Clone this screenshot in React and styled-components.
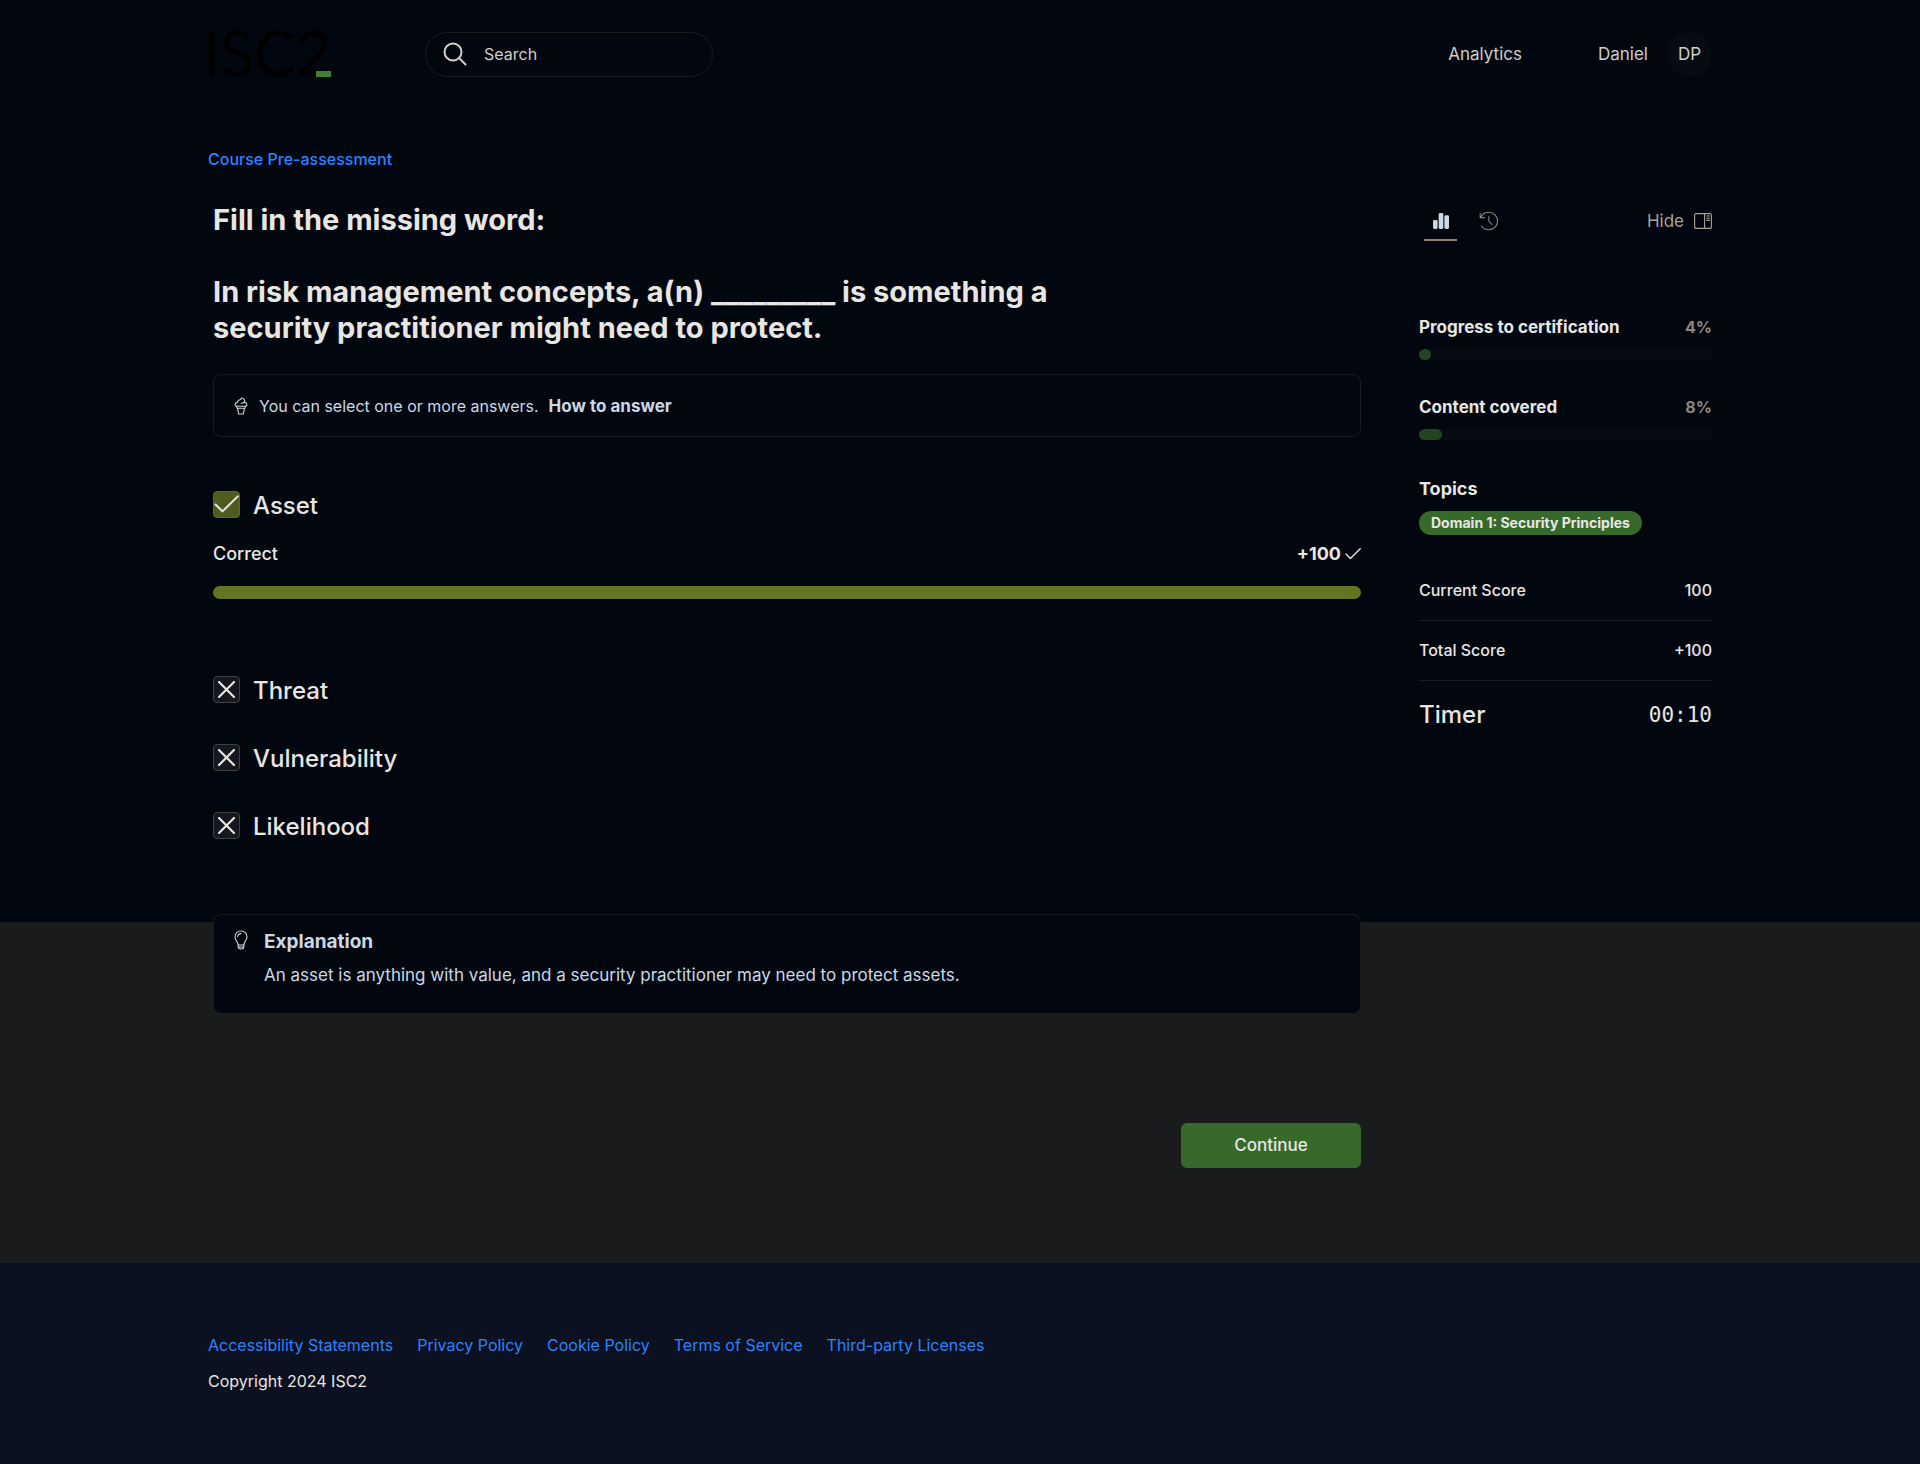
import { useState } from "react";
import styled, { createGlobalStyle, ThemeProvider } from "styled-components";

const theme = {
  colors: {
    page: "#02060e",
    shade: "#1a1b1c",
    footer: "#0b1120",
    line: "#191b1f",
    track: "#070b12",
    text: "#e8e6e3",
    nav: "#d1cdc7",
    cool: "#cbd8e6",
    muted: "#8a8681",
    link: "#2b83ff",
    green: "#376a2a",
    darkGreen: "#234420",
    olive: "#657422",
    oliveBox: "#505c1e",
  },
};

const GlobalStyle = createGlobalStyle`
  * {
    box-sizing: border-box;
  }
  body {
    margin: 0;
    background-color: #1a1b1c;
    color: #e8e6e3;
    font-family: Inter, "Open Sans", sans-serif;
    font-size: 16px;
    line-height: 24px;
  }
  button, input {
    font: inherit;
    color: inherit;
  }
  h1, h2, p, dl, dd, ul {
    margin: 0;
    padding: 0;
  }
`;

const answers = [
  { id: "asset", label: "Asset", correct: true, score: "+100" },
  { id: "threat", label: "Threat" },
  { id: "vulnerability", label: "Vulnerability" },
  { id: "likelihood", label: "Likelihood" },
];

const progress = [
  { label: "Progress to certification", value: 4 },
  { label: "Content covered", value: 8 },
];

const scores = [
  { label: "Current Score", value: "100" },
  { label: "Total Score", value: "+100" },
];

const footerLinks = [
  "Accessibility Statements",
  "Privacy Policy",
  "Cookie Policy",
  "Terms of Service",
  "Third-party Licenses",
];

export default function App() {
  return (
    <ThemeProvider theme={theme}>
      <GlobalStyle />
      <Page>
        <SiteHeader />
        <Container>
          <Breadcrumb>
            <Link href="#course">Course Pre-assessment</Link>
          </Breadcrumb>
          <Columns>
            <Question />
            <Sidebar />
          </Columns>
        </Container>
      </Page>
      <SiteFooter />
    </ThemeProvider>
  );
}

function SiteHeader() {
  return (
    <Header>
      <HeaderInner>
        <LogoLink href="#home" aria-label="ISC2 home">
          <Logo />
        </LogoLink>
        <SearchBox>
          <SearchIcon />
          <SearchInput type="search" placeholder="Search" aria-label="Search" />
        </SearchBox>
        <HeaderNav>
          <NavLink href="#analytics">Analytics</NavLink>
          <UserButton type="button">
            Daniel
            <Initials>DP</Initials>
          </UserButton>
        </HeaderNav>
      </HeaderInner>
    </Header>
  );
}

function Question() {
  return (
    <main>
      <Title>
        Fill in the missing word:
        <br />
        <br />
        In risk management concepts, a(n) _________ is something a security
        practitioner might need to protect.
      </Title>
      <Hint>
        <IceCreamIcon />
        <p>You can select one or more answers.</p>
        <HintButton type="button">How to answer</HintButton>
      </Hint>
      <Answers>
        {answers.map((answer) => (
          <Answer key={answer.id} {...answer} />
        ))}
      </Answers>
      <Explanation>
        <BulbIcon />
        <div>
          <ExplanationTitle>Explanation</ExplanationTitle>
          <ExplanationText>
            An asset is anything with value, and a security practitioner may
            need to protect assets.
          </ExplanationText>
        </div>
      </Explanation>
      <Actions>
        <ContinueButton type="button">Continue</ContinueButton>
      </Actions>
    </main>
  );
}

function Answer({ id, label, correct, score }) {
  return (
    <AnswerItem $correct={correct}>
      <AnswerLabel htmlFor={id}>
        <CheckWrapper>
          <Checkbox id={id} type="checkbox" $correct={correct} defaultChecked={correct} />
          {correct ? <CheckIcon size={25} width={1.3} /> : <CrossIcon />}
        </CheckWrapper>
        {label}
      </AnswerLabel>
      {correct && (
        <>
          <ResultRow>
            <span>Correct</span>
            <ResultScore>
              {score}
              <CheckIcon size={16} width={1.4} />
            </ResultScore>
          </ResultRow>
          <ResultBar />
        </>
      )}
    </AnswerItem>
  );
}

function Sidebar() {
  const [tab, setTab] = useState("stats");

  return (
    <Aside>
      <TabBar>
        <TabButton
          type="button"
          aria-label="Statistics"
          $active={tab === "stats"}
          onClick={() => setTab("stats")}
        >
          <BarsIcon />
        </TabButton>
        <TabButton
          type="button"
          aria-label="History"
          $active={tab === "history"}
          onClick={() => setTab("history")}
        >
          <HistoryIcon />
        </TabButton>
        <HideButton type="button">
          Hide
          <PanelIcon />
        </HideButton>
      </TabBar>
      <ProgressList>
        {progress.map(({ label, value }) => (
          <div key={label}>
            <ProgressHead>
              <ProgressLabel>{label}</ProgressLabel>
              <Percent>{value}%</Percent>
            </ProgressHead>
            <Track role="progressbar" aria-label={label} aria-valuenow={value}>
              <Fill style={{ width: `${value}%` }} />
            </Track>
          </div>
        ))}
      </ProgressList>
      <TopicsTitle>Topics</TopicsTitle>
      <Topic>Domain 1: Security Principles</Topic>
      <ScoreList>
        {scores.map(({ label, value }) => (
          <ScoreRow key={label}>
            <dt>{label}</dt>
            <dd>{value}</dd>
          </ScoreRow>
        ))}
        <TimerRow>
          <dt>Timer</dt>
          <TimerValue>00:10</TimerValue>
        </TimerRow>
      </ScoreList>
    </Aside>
  );
}

function SiteFooter() {
  return (
    <Footer>
      <Container>
        <FooterLinks>
          {footerLinks.map((label) => (
            <li key={label}>
              <Link href="#footer">{label}</Link>
            </li>
          ))}
        </FooterLinks>
        <p>Copyright 2024 ISC2</p>
      </Container>
    </Footer>
  );
}

/* Icons */

function Logo() {
  return (
    <svg width="136" height="84" viewBox="-6 -19 136 84" aria-hidden="true">
      <text x="-5" y="45" fontFamily="Lato" fontSize="62" fill="#000">
        ISC2
      </text>
      <rect x="108" y="40" width="15" height="6" fill="#417e31" />
    </svg>
  );
}

function SearchIcon() {
  return (
    <svg width="24" height="24" viewBox="0 0 24 24" fill="none" stroke="#d1cdc7" strokeWidth="2" strokeLinecap="round">
      <circle cx="10" cy="10" r="8.5" />
      <path d="M16 16l6.5 6.5" />
    </svg>
  );
}

function IceCreamIcon() {
  return (
    <svg width="16" height="18" viewBox="0 0 16 18" fill="none" stroke="#cbd8e6" strokeWidth="1.1" strokeLinejoin="round" strokeLinecap="round">
      <path d="M5.6 3.4C6.4 2.4 8.6 3 8.4 1C11.2 1.2 12.2 3.2 11.6 5.4C14.4 5.8 14.4 9.2 12.4 9.2H3.6C1.6 9.2 1.6 5.8 4.4 5.4C4.2 4.6 4.8 3.8 5.6 3.4" />
      <path d="M8.2 6.2C9.2 6.4 10.4 6 11 5" />
      <path d="M3.6 9.4L4 11.2H12L12.4 9.4M4.6 11.4L5.6 17H10.4L11.4 11.4" />
    </svg>
  );
}

function BulbIcon() {
  return (
    <svg width="16" height="20" viewBox="0 0 16 20" fill="none" stroke="#cbd8e6" strokeWidth="1.1" strokeLinejoin="round" strokeLinecap="round">
      <path d="M5.2 15C5.2 12 2 10.4 2 6.8C2 3.4 4.6 1 8 1S14 3.4 14 6.8C14 10.4 10.8 12 10.8 15Z" />
      <path d="M5.2 15V16.6C5.2 18 6.4 19 8 19S10.8 18 10.8 16.6V15M5.4 17H10.6" />
      <path d="M4.6 6.8C4.6 4.9 6 3.6 8 3.6" />
    </svg>
  );
}

function CheckIcon({ size, width }) {
  return (
    <svg width={size} height={size} viewBox="0 0 16 16" fill="none" stroke="#e8e6e3" strokeWidth={width} strokeLinecap="round" strokeLinejoin="round">
      <path d="M1 8L5.4 12.4L15.2 2.8" />
    </svg>
  );
}

function CrossIcon() {
  return (
    <svg width="17" height="17" viewBox="0 0 17 17" fill="none" stroke="#e8e6e3" strokeWidth="2.2" strokeLinecap="round">
      <path d="M1 1L16 16M16 1L1 16" />
    </svg>
  );
}

function BarsIcon() {
  return (
    <svg width="16" height="16" viewBox="0 0 16 16" fill="#cbd8e6">
      <rect x="0" y="7" width="4.6" height="9" rx="1.4" />
      <rect x="5.7" y="0" width="4.6" height="16" rx="1.4" />
      <rect x="11.4" y="2.2" width="4.6" height="13.8" rx="1.4" />
    </svg>
  );
}

function HistoryIcon() {
  return (
    <svg width="20" height="20" viewBox="0 0 20 20" fill="none" stroke="#8a8681" strokeWidth="1.1" strokeLinecap="round" strokeLinejoin="round">
      <path d="M1.2 2.6V6.6H5.4M1.8 6.2C3.2 3 6.2 1.2 9.8 1.2C14.8 1.2 18.6 5.2 18.6 10S14.8 18.8 9.8 18.8C6.6 18.8 4 17.4 2.4 15" />
      <path d="M9.8 5.6V10L12.8 13.4" />
    </svg>
  );
}

function PanelIcon() {
  return (
    <svg width="18" height="16" viewBox="0 0 18 16" fill="none" stroke="#a8a39c" strokeWidth="1.1" strokeLinecap="round">
      <rect x=".6" y=".6" width="16.8" height="14.8" rx="2" />
      <path d="M10.6 .6V15.4M12.8 3H15.4M12.8 5.2H15.4M12.8 7.4H15.4" />
    </svg>
  );
}

/* Layout */

// the dark backdrop covers only the first screen, the rest stays grey
const Page = styled.div`
  background: linear-gradient(
    ${({ theme }) => theme.colors.page} 922px,
    ${({ theme }) => theme.colors.shade} 922px
  );
`;

const Container = styled.div`
  width: 100%;
  max-width: 1552px;
  margin: 0 auto;
  padding: 0 24px;
`;

const Columns = styled.div`
  display: grid;
  grid-template-columns: minmax(0, 1fr) 293px;
  gap: 58px;
  padding-left: 5px;
`;

const Header = styled.header`
  border-bottom: 1px solid #04080f;
`;

const HeaderInner = styled(Container)`
  display: flex;
  align-items: center;
  height: 108px;
`;

const LogoLink = styled.a`
  display: flex;
  margin: 0 87px 0 -6px;
`;

const SearchBox = styled.label`
  display: flex;
  align-items: center;
  gap: 17px;
  width: 288px;
  height: 45px;
  padding: 0 17px;
  border: 1px solid ${({ theme }) => theme.colors.line};
  border-radius: 24px;
`;

const SearchInput = styled.input`
  flex: 1;
  min-width: 0;
  padding: 0;
  border: none;
  outline: none;
  background-color: transparent;
  color: ${({ theme }) => theme.colors.nav};
  appearance: none;

  &::placeholder {
    color: ${({ theme }) => theme.colors.nav};
    opacity: 1;
  }
`;

const HeaderNav = styled.nav`
  display: flex;
  align-items: center;
  gap: 76px;
  margin-left: auto;
  font-size: 17px;
`;

const NavLink = styled.a`
  color: ${({ theme }) => theme.colors.nav};
  text-decoration: none;
`;

const UserButton = styled.button`
  display: flex;
  align-items: center;
  gap: 19px;
  padding: 0;
  border: none;
  background-color: transparent;
  color: ${({ theme }) => theme.colors.nav};
  cursor: pointer;
`;

const Initials = styled.span`
  display: flex;
  align-items: center;
  justify-content: center;
  width: 45px;
  height: 45px;
  border-radius: 50%;
  background-color: ${({ theme }) => theme.colors.track};
`;

const Link = styled.a`
  color: ${({ theme }) => theme.colors.link};
  text-decoration: none;
`;

const Breadcrumb = styled.nav`
  padding: 38px 0 31px;
  font-weight: 500;
`;

/* Question */

const Title = styled.h1`
  max-width: 870px;
  font-size: 29px;
  line-height: 36px;
  font-weight: 700;
`;

const Hint = styled.div`
  display: flex;
  align-items: center;
  gap: 10px;
  height: 63px;
  margin-top: 28px;
  padding: 0 19px;
  border: 1px solid ${({ theme }) => theme.colors.line};
  border-radius: 8px;
  color: ${({ theme }) => theme.colors.cool};
`;

const HintButton = styled.button`
  padding: 0;
  border: none;
  background-color: transparent;
  font-size: 17px;
  font-weight: 700;
  cursor: pointer;
`;

const Answers = styled.ul`
  display: flex;
  flex-direction: column;
  gap: 40px;
  margin-top: 54px;
  list-style: none;
`;

const AnswerItem = styled.li`
  margin-bottom: ${({ $correct }) => ($correct ? "37px" : "0")};
`;

const AnswerLabel = styled.label`
  display: flex;
  align-items: flex-start;
  gap: 13px;
  height: 28px;
  font-size: 24px;
  line-height: 30px;
  font-weight: 500;
`;

const CheckWrapper = styled.span`
  display: grid;
  place-items: center;

  > * {
    grid-area: 1 / 1;
  }
  svg {
    pointer-events: none;
  }
`;

const Checkbox = styled.input`
  appearance: none;
  width: 27px;
  height: 27px;
  margin: 0;
  border: 1px solid ${({ $correct }) => ($correct ? "#5d6a2c" : "#3f403f")};
  border-radius: 4px;
  background-color: ${({ theme, $correct }) =>
    $correct ? theme.colors.oliveBox : "#15181e"};
`;

const ResultRow = styled.div`
  display: flex;
  justify-content: space-between;
  margin-top: 22px;
  font-size: 18px;
  line-height: 26px;
  font-weight: 500;
`;

const ResultScore = styled.span`
  display: flex;
  align-items: center;
  gap: 4px;
  font-weight: 700;
`;

const ResultBar = styled.div`
  height: 13px;
  margin-top: 19px;
  border-radius: 7px;
  background-color: ${({ theme }) => theme.colors.olive};
`;

const Explanation = styled.section`
  display: flex;
  gap: 15px;
  min-height: 100px;
  margin-top: 74px;
  padding: 15px 19px;
  border: 1px solid ${({ theme }) => theme.colors.line};
  border-radius: 8px;
  background-color: ${({ theme }) => theme.colors.page};
  color: ${({ theme }) => theme.colors.cool};
`;

const ExplanationTitle = styled.h2`
  font-size: 19px;
  line-height: 24px;
  font-weight: 700;
`;

const ExplanationText = styled.p`
  margin-top: 9px;
  font-size: 17px;
`;

const Actions = styled.div`
  display: flex;
  justify-content: flex-end;
  padding: 109px 0 95px;
`;

const ContinueButton = styled.button`
  width: 180px;
  height: 45px;
  padding: 0 0 2px;
  border: none;
  border-radius: 6px;
  background-color: ${({ theme }) => theme.colors.green};
  font-size: 17px;
  font-weight: 500;
  cursor: pointer;
`;

/* Sidebar */

const Aside = styled.aside`
  padding-top: 2px;
`;

const TabBar = styled.div`
  display: flex;
  gap: 15px;
  height: 37px;
  padding-left: 5px;
`;

const TabButton = styled.button`
  display: flex;
  align-items: center;
  justify-content: center;
  width: 33px;
  padding: 0 0 1px;
  border: none;
  border-bottom: 2px solid
    ${({ $active }) => ($active ? "#8c8072" : "transparent")};
  background-color: transparent;
  cursor: pointer;
`;

const HideButton = styled.button`
  display: flex;
  align-items: center;
  gap: 10px;
  margin-left: auto;
  padding: 0 0 4px;
  border: none;
  background-color: transparent;
  color: #a8a39c;
  font-size: 17px;
  cursor: pointer;
`;

const ProgressList = styled.div`
  display: flex;
  flex-direction: column;
  gap: 35px;
  margin-top: 74px;
`;

const ProgressHead = styled.div`
  display: flex;
  justify-content: space-between;
  font-weight: 700;
`;

const ProgressLabel = styled.span`
  font-size: 17px;
`;

const Percent = styled.span`
  color: ${({ theme }) => theme.colors.muted};
`;

const Track = styled.div`
  height: 11px;
  margin-top: 10px;
  border-radius: 6px;
  background-color: ${({ theme }) => theme.colors.track};
`;

const Fill = styled.div`
  height: 100%;
  border-radius: 6px;
  background-color: ${({ theme }) => theme.colors.darkGreen};
`;

const TopicsTitle = styled.h2`
  margin-top: 37px;
  font-size: 18px;
  line-height: 24px;
  font-weight: 700;
`;

const Topic = styled.span`
  display: inline-block;
  margin-top: 10px;
  padding: 0 12px;
  border-radius: 12px;
  background-color: ${({ theme }) => theme.colors.green};
  font-size: 14px;
  line-height: 24px;
  font-weight: 700;
`;

const ScoreList = styled.dl`
  margin-top: 26px;
  font-weight: 500;
`;

const ScoreRow = styled.div`
  display: flex;
  align-items: center;
  justify-content: space-between;
  height: 60px;
  padding-bottom: 2px;
  border-bottom: 1px solid ${({ theme }) => theme.colors.line};
`;

const TimerRow = styled.div`
  display: flex;
  align-items: center;
  justify-content: space-between;
  height: 68px;
  font-size: 24px;
`;

const TimerValue = styled.dd`
  font-family: "DejaVu Sans Mono", monospace;
  font-size: 21px;
`;

/* Footer */

const Footer = styled.footer`
  padding: 70px 0 71px;
  background-color: ${({ theme }) => theme.colors.footer};
`;

const FooterLinks = styled.ul`
  display: flex;
  flex-wrap: wrap;
  gap: 24px;
  margin-bottom: 12px;
  list-style: none;
`;
